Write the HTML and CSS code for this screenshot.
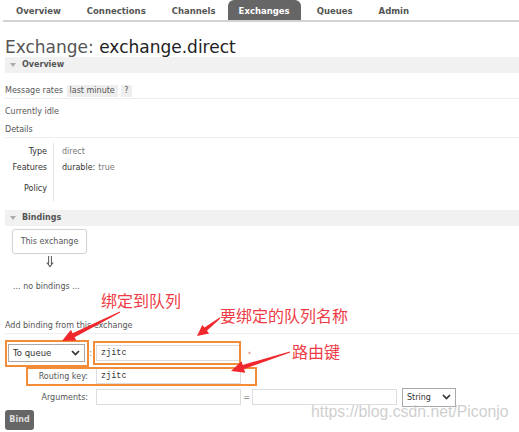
FILE: index.html
```html
<!DOCTYPE html>
<html>
<head>
<meta charset="utf-8">
<title>Exchange: exchange.direct</title>
<link rel="stylesheet" href="styles.css">
</head>
<body>
<div class="page">
  <ul class="tabs">
    <li>Overview</li>
    <li>Connections</li>
    <li>Channels</li>
    <li class="active">Exchanges</li>
    <li>Queues</li>
    <li>Admin</li>
  </ul>
  <div class="main">
    <h1>Exchange: <b>exchange.direct</b></h1>
    <div class="section-h"><span class="tri"></span>Overview</div>
    <div class="rates">Message rates <span class="pill">last minute</span> <span class="pill">?</span></div>
    <div class="line">Currently idle</div>
    <div class="line sub">Details</div>
    <div class="details">
      <div class="k">Type</div><div class="v">direct</div>
      <div class="k">Features</div><div class="v"><span class="dk">durable:</span> true</div>
      <div class="k tall">Policy</div><div class="v tall"></div>
    </div>
    <div class="section-h sec2"><span class="tri"></span>Bindings</div>
    <div class="bindbox">This exchange</div>
    <div class="down"><svg width="8" height="12" viewBox="0 0 8 12"><path d="M2.6 0 V8 M5.4 0 V8" stroke="#555" stroke-width="1" fill="none"/><path d="M0.8 6.5 L4 10.5 L7.2 6.5" stroke="#555" stroke-width="1.1" fill="none"/></svg></div>
    <div class="nob">... no bindings ...</div>
    <div class="addh">Add binding from this exchange</div>
    <form class="form">
      <div class="row r1">
        <div class="select wide">To queue<svg width="9" height="6" viewBox="0 0 9 6"><path d="M1 1 L4.5 4.5 L8 1" fill="none" stroke="#333" stroke-width="1.7"/></svg></div>
        <span class="colon">:</span>
        <input class="input" type="text" value="zjitc">
        <span class="star">*</span>
      </div>
      <div class="row r2">
        <label class="lbl">Routing key:</label>
        <input class="input" type="text" value="zjitc">
      </div>
      <div class="row r3">
        <label class="lbl">Arguments:</label>
        <input class="input" type="text" value="">
        <span class="eq">=</span>
        <input class="input" type="text" value="">
        <div class="select small">String<svg width="9" height="6" viewBox="0 0 9 6"><path d="M1 1 L4.5 4.5 L8 1" fill="none" stroke="#333" stroke-width="1.7"/></svg></div>
      </div>
      <div class="btn">Bind</div>
    </form>
  </div>

  <div class="annot">
    <div class="obox ob1"></div>
    <div class="obox ob2"></div>
    <div class="obox ob3"></div>
    <svg class="arrows" width="519" height="432" viewBox="0 0 519 432">
      <polygon fill="#f0282d" points="119.8,311.6 72.6,333.2 70.9,329.8 62,341 76.3,340.6 74.6,337.2 120.2,312.4"/>
      <polygon fill="#f0282d" points="219.7,317.6 204.5,327.6 202.3,324.9 197,336 209.1,333.5 206.9,330.8 220.3,318.4"/>
      <polygon fill="#f0282d" points="289.8,351.5 242.7,364.9 241.6,361.3 231,371 245.2,372.7 244.1,369.1 290.2,352.5"/>
    </svg>
    <div class="note n1">绑定到队列</div>
    <div class="note n2">要绑定的队列名称</div>
    <div class="note n3">路由键</div>
    <div class="wm">https://blog.csdn.net/Piconjo</div>
  </div>
</div>
</body>
</html>
```

FILE: styles.css
```css
html, body {
  margin: 0;
  padding: 0;
  background: #fff;
}
.page {
  position: relative;
  width: 519px;
  height: 432px;
  overflow: hidden;
  font-family: "DejaVu Sans", "Noto Sans", sans-serif;
  font-size: 8px;
  color: #555;
}
.tabs {
  list-style: none;
  margin: 0 0 0 3px;
  padding: 0;
  display: flex;
  height: 20px;
  border-bottom: 2px solid #d2d2d2;
}
.tabs li {
  padding: 0 13px;
  line-height: 22px;
  font-size: 8.5px;
  font-weight: bold;
  color: #555;
}
.tabs li.active {
  background: #666;
  color: #fff;
  border-radius: 6px 6px 0 0;
  padding: 0 11px;
  margin-left: -1px;
  margin-right: 3px;
}
.main {
  padding: 0 0 0 5px;
}
h1 {
  margin: 15px 0 0 0;
  font-size: 17px;
  line-height: 20px;
  font-weight: normal;
  color: #555;
}
h1 b {
  font-weight: normal;
  color: #222;
}
.section-h {
  height: 16px;
  line-height: 16px;
  background: #f1f1f1;
  font-weight: bold;
  color: #555;
  display: flex;
  align-items: center;
}
.tri {
  width: 0;
  height: 0;
  border-left: 3px solid transparent;
  border-right: 3px solid transparent;
  border-top: 4px solid #aaa;
  margin: 0 6px 0 5px;
}
.rates {
  margin-top: 11px;
  line-height: 14px;
  height: 14px;
  border-bottom: 1px solid #eee;
}
.pill {
  display: inline-block;
  background: #eee;
  line-height: 12px;
  padding: 0 3px;
  margin-left: 1px;
}
.line {
  margin-top: 6px;
  line-height: 14px;
}
.line.sub {
  margin-top: 4px;
  border-bottom: 1px solid #eee;
}
.details {
  margin-top: 5px;
  display: grid;
  grid-template-columns: 49px 1fr;
  grid-template-rows: 16px 16px 26px;
}
.details .k {
  padding-right: 6px;
  border-right: 1px solid #e2e2e2;
  color: #333;
  text-align: right;
  white-space: nowrap;
  align-self: stretch;
  display: flex;
  align-items: center;
  justify-content: flex-end;
}
.details .v {
  padding-left: 8px;
  color: #777;
  white-space: nowrap;
  display: flex;
  align-items: center;
  gap: 3px;
}
.details .v .dk {
  color: #333;
}
.sec2 {
  margin-top: 9px;
}
.bindbox {
  margin: 3px 0 0 7px;
  width: 73px;
  height: 23px;
  line-height: 23px;
  text-align: center;
  border: 1px solid #d4d4d4;
  border-radius: 3px;
  box-shadow: 0 0 2px #eee;
}
.down {
  margin-left: 7px;
  width: 75px;
  height: 16px;
  display: flex;
  align-items: center;
  justify-content: center;
}
.nob {
  margin: 10px 0 0 8px;
  line-height: 14px;
}
.addh {
  margin-top: 25px;
  line-height: 14px;
  border-bottom: 1px solid #eee;
}
.form {
  margin: 6px 0 0 0;
}
.row {
  display: flex;
  align-items: center;
}
.r1 { height: 26px; }
.r2 { height: 20px; }
.r3 { height: 22px; }
.select {
  box-sizing: border-box;
  height: 18px;
  border: 1px solid #a9a9a9;
  background: #fff;
  color: #333;
  display: flex;
  align-items: center;
  justify-content: space-between;
  padding: 0 4px 0 4px;
}
.select.wide {
  margin-left: 3px;
  width: 77px;
  font-size: 8.5px;
}
.select.small {
  margin-left: 5px;
  width: 54px;
  height: 19px;
}
.colon {
  width: 11px;
  text-align: center;
  color: #777;
}
.input {
  box-sizing: border-box;
  width: 145px;
  height: 16px;
  margin: 0;
  border: 1px solid #ddd;
  padding: 0 4px;
  font-family: "Liberation Mono", "DejaVu Sans Mono", monospace;
  font-size: 8.5px;
  color: #333;
  background: #fff;
  outline: none;
}
.star {
  margin-left: 7px;
  color: #e55;
  font-size: 6px;
}
.lbl {
  width: 83px;
  text-align: right;
  margin-right: 8px;
  color: #555;
}
.eq {
  width: 11px;
  text-align: center;
  color: #777;
}
.btn {
  margin-top: 2px;
  width: 29px;
  height: 20px;
  line-height: 20px;
  text-align: center;
  background: #666;
  color: #ddd;
  border-radius: 3px;
  font-weight: bold;
}
.annot {
  position: absolute;
  left: 0;
  top: 0;
  width: 519px;
  height: 432px;
  pointer-events: none;
}
.obox {
  position: absolute;
  box-sizing: border-box;
  border: 2px solid #f28c38;
}
.ob1 { left: 5px; top: 340px; width: 84px; height: 27px; }
.ob2 { left: 93px; top: 341px; width: 148px; height: 24px; }
.ob3 { left: 26px; top: 367px; width: 231px; height: 19px; }
.arrows {
  position: absolute;
  left: 0;
  top: 0;
}
.note {
  position: absolute;
  font-family: "Noto Sans CJK SC", "Noto Sans", sans-serif;
  font-size: 16px;
  line-height: 18px;
  color: #ee3b45;
  white-space: nowrap;
}
.n1 { left: 101px; top: 291px; }
.n2 { left: 220px; top: 306px; }
.n3 { left: 292px; top: 342px; }
.wm {
  position: absolute;
  left: 311px;
  top: 402px;
  font-family: "Liberation Sans", Arial, sans-serif;
  font-size: 15.8px;
  line-height: 19px;
  color: rgba(190, 190, 190, 0.75);
  white-space: nowrap;
}
```
